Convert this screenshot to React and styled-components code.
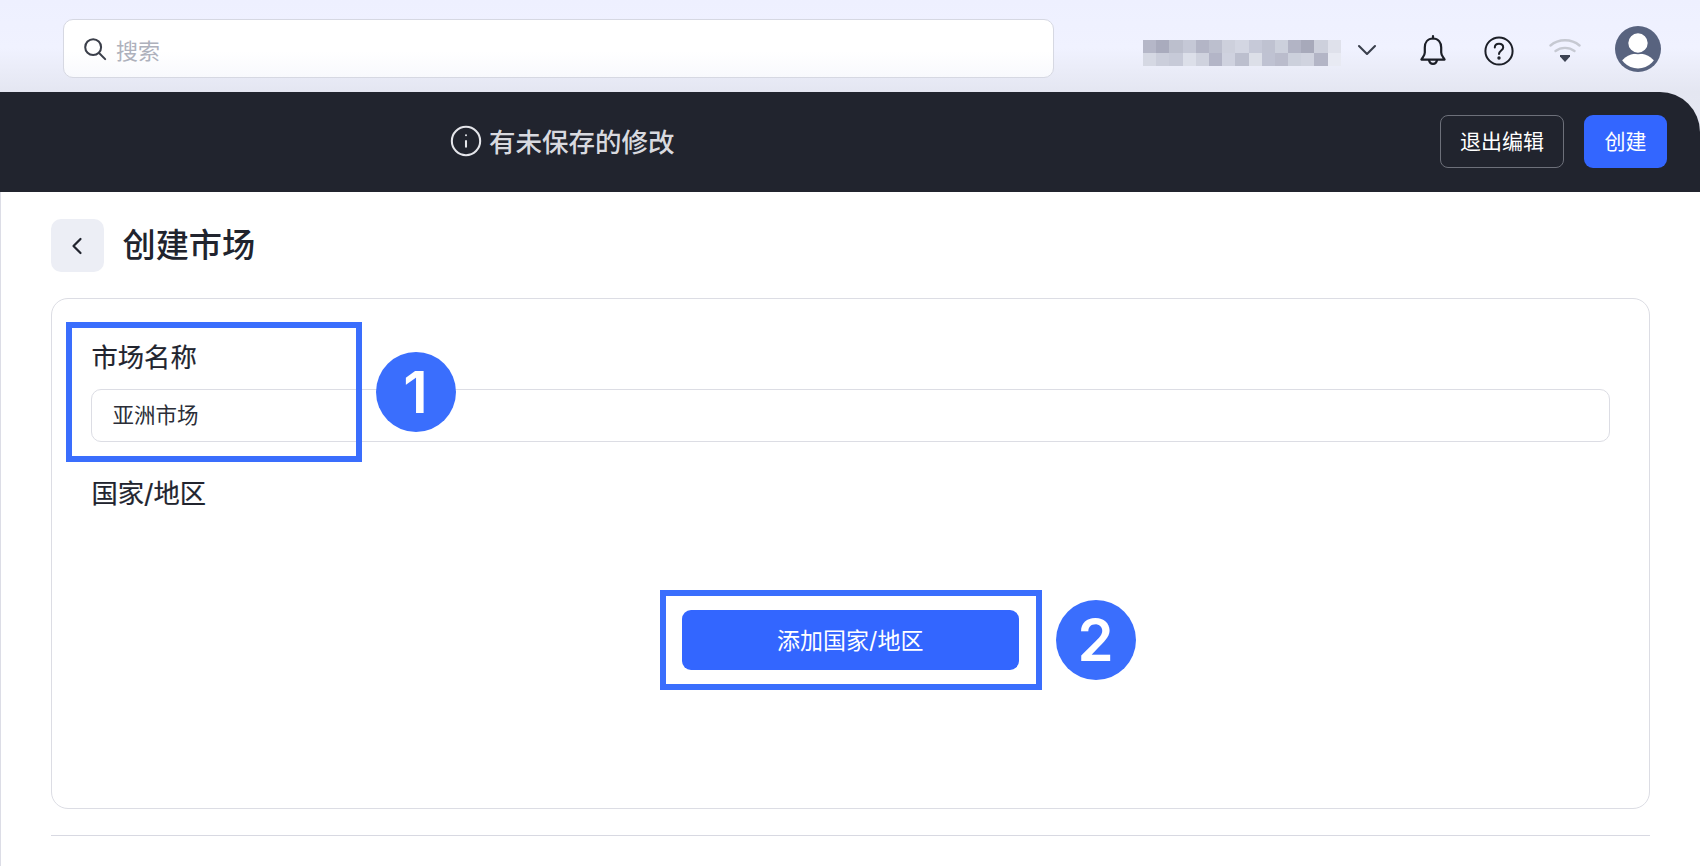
import styled, { createGlobalStyle } from "styled-components"
import { ChevronLeft, Info } from "lucide-react"

const GlobalStyle = createGlobalStyle`
  html, body {
    margin: 0;
    background: #fff;
    overflow: hidden;
  }
  body {
    font-family: "Inter", "Noto Sans CJK SC", sans-serif;
    color: #21242e;
  }
`

const BLUR_ROWS = [
  ["#b5b7c8", "#a9abbd", "#bcbfcd", "#c5c8d6", "#b3b5c6", "#bcbfce", "#cdd0dc", "#d3d6e2", "#c6c9d8", "#bfc2d1", "#ccd0dc", "#b2b4c5", "#a7a9ba", "#cdd0dc", "#dfe1eb"],
  ["#d5d8e3", "#cbcedb", "#c7cad8", "#dcdfe9", "#cfd2de", "#b3b5c7", "#cfd2df", "#bcbfce", "#dcdfe8", "#bfc2d2", "#babccc", "#ccd0dc", "#d0d3df", "#b3b5c6", "#e8eaf3"],
]

function SearchIcon() {
  return (
    <svg width="24" height="24" viewBox="0 0 26 26" fill="none" stroke="#3b3f4a" strokeWidth="2.2" strokeLinecap="round">
      <circle cx="11" cy="11" r="8.6" />
      <path d="M17.4 17.4L24 24" />
    </svg>
  )
}

function ChevronIcon() {
  return (
    <svg width="20" height="12" viewBox="0 0 20 12" fill="none" stroke="#3a3f4c" strokeWidth="2.1" strokeLinecap="round" strokeLinejoin="round">
      <path d="M2 2L10 10L18 2" />
    </svg>
  )
}

function BellIcon() {
  return (
    <svg width="28" height="32" viewBox="0 0 28 32" fill="none" stroke="#1c1f27" strokeWidth="2.2" strokeLinejoin="round" strokeLinecap="round">
      <path d="M14 2V4.5" />
      <path d="M14 4.5C8.6 4.5 5.8 8.6 5.8 13.5V18.5C5.8 21.6 3.8 23 2.4 25.6H25.6C24.2 23 22.2 21.6 22.2 18.5V13.5C22.2 8.6 19.4 4.5 14 4.5Z" />
      <path d="M10 26C10.4 28.6 12 29.8 14 29.8C16 29.8 17.6 28.6 18 26" />
    </svg>
  )
}

function HelpIcon() {
  return (
    <svg width="30" height="30" viewBox="0 0 30 30" fill="none" stroke="#1c1f27" strokeWidth="2" strokeLinecap="round">
      <circle cx="15" cy="15" r="13.6" />
      <path d="M10.8 11.6C10.8 9.2 12.7 7.8 15 7.8C17.4 7.8 19.2 9.3 19.2 11.4C19.2 14.4 15 14.6 15 18" />
      <circle cx="15" cy="22" r="0.7" fill="#1c1f27" />
    </svg>
  )
}

function WifiIcon() {
  return (
    <svg width="32" height="26" viewBox="0 0 32 26" fill="none">
      <path d="M1.5 8.5C9.5 1.5 22.5 1.5 30.5 8.5" stroke="#c6c9d2" strokeWidth="2.4" strokeLinecap="round" />
      <path d="M6.5 14C12 9.8 20 9.8 25.5 14" stroke="#c6c9d2" strokeWidth="2.4" strokeLinecap="round" />
      <path d="M11 18H21V19.5L16 25L11 19.5Z" fill="#3d4354" />
    </svg>
  )
}

function AvatarIcon() {
  return (
    <svg width="46" height="46" viewBox="0 0 46 46">
      <defs>
        <clipPath id="avatar-clip">
          <circle cx="23" cy="23" r="19.5" />
        </clipPath>
      </defs>
      <circle cx="23" cy="23" r="23" fill="#58637f" />
      <ellipse cx="23" cy="41" rx="18" ry="13.5" fill="#fff" clipPath="url(#avatar-clip)" />
      <circle cx="23" cy="17" r="10.5" fill="#fff" stroke="#58637f" strokeWidth="1.6" />
    </svg>
  )
}

export default function App() {
  return (
    <>
      <GlobalStyle />
      <Page>
        <Header>
          <TopBar>
            <SearchBox>
              <SearchIcon />
              <SearchHint>搜索</SearchHint>
            </SearchBox>
            <BlurredName>
              {BLUR_ROWS.flat().map((color, i) => (
                <BlurCell key={i} $color={color} />
              ))}
            </BlurredName>
            <IconSlot $left={16} $width={20}>
              <ChevronIcon />
            </IconSlot>
            <IconSlot $left={42.5} $width={28}>
              <BellIcon />
            </IconSlot>
            <IconSlot $left={36.5} $width={30} $top={9}>
              <HelpIcon />
            </IconSlot>
            <IconSlot $left={35.5} $width={32}>
              <WifiIcon />
            </IconSlot>
            <IconSlot $left={33.5} $width={46} $top={6}>
              <AvatarIcon />
            </IconSlot>
          </TopBar>
          <EditBar>
            <Notice>
              <Info size={34} strokeWidth={1.45} color="#e4e5ea" />
              <NoticeText>有未保存的修改</NoticeText>
            </Notice>
            <OutlineButton>退出编辑</OutlineButton>
            <PrimaryButton>创建</PrimaryButton>
          </EditBar>
        </Header>
        <Main>
          <TitleRow>
            <BackButton>
              <ChevronLeft size={28} strokeWidth={1.9} color="#21242e" />
            </BackButton>
            <Title>创建市场</Title>
          </TitleRow>
          <Card>
            <FieldLabel>市场名称</FieldLabel>
            <NameInput>亚洲市场</NameInput>
            <FieldLabel $top={35}>国家/地区</FieldLabel>
            <AddButton>添加国家/地区</AddButton>
            <MarkBox $left={14} $top={23} $width={296} $height={140} />
            <MarkDot $left={324} $top={53}>1</MarkDot>
            <MarkBox $left={608} $top={291} $width={382} $height={100} />
            <MarkDot $left={1004} $top={301}>2</MarkDot>
          </Card>
          <Divider />
        </Main>
      </Page>
    </>
  )
}

const Page = styled.div`
  width: 1700px;
  height: 866px;
  overflow: hidden;
`
const Header = styled.header`
  background: linear-gradient(#eef0ff 0, #f0f2ff 48px, #e4e6f1 92px, #e9ebf5 100%);
`
const TopBar = styled.div`
  height: 92px;
  display: flex;
  align-items: center;
  padding-left: 63px;
  box-sizing: border-box;
`
const SearchBox = styled.div`
  width: 991px;
  height: 59px;
  margin-top: 5px;
  box-sizing: border-box;
  display: flex;
  align-items: center;
  gap: 9px;
  padding-left: 19px;
  background: linear-gradient(#fff 55%, #f8f9fd);
  border: 1.5px solid #d6d8e2;
  border-radius: 10px;
`
const SearchHint = styled.span`
  font-size: 22px;
  color: #aeb1bc;
`
const BlurredName = styled.div`
  display: grid;
  grid-template-columns: repeat(15, 13.2px);
  grid-auto-rows: 13px;
  margin-left: 89px;
  margin-top: 13px;
`
const BlurCell = styled.div`
  background: ${(p) => p.$color};
`
const IconSlot = styled.div`
  width: ${(p) => p.$width}px;
  margin-left: ${(p) => p.$left}px;
  margin-top: ${(p) => p.$top || 8}px;
  display: flex;
  justify-content: center;
  align-items: center;
  flex-shrink: 0;
`
const EditBar = styled.div`
  height: 100px;
  box-sizing: border-box;
  display: flex;
  align-items: center;
  padding: 0 33px 2px 449px;
  background: #21242e;
  border-top-right-radius: 40px;
`
const Notice = styled.div`
  display: flex;
  align-items: center;
  gap: 6px;
  flex: 1;
`
const NoticeText = styled.span`
  font-size: 26.5px;
  font-weight: 500;
  color: #d8d9df;
  margin-top: -1px;
`
const OutlineButton = styled.button`
  width: 124px;
  height: 53px;
  padding: 0 0 2px;
  background: transparent;
  border: 1.5px solid #6d707a;
  border-radius: 8px;
  color: #fff;
  font-family: inherit;
  font-size: 21px;
`
const PrimaryButton = styled.button`
  width: 83px;
  height: 53px;
  margin-left: 20px;
  padding: 0 0 2px;
  background: #3366ff;
  border: none;
  border-radius: 9px;
  color: #fff;
  font-family: inherit;
  font-size: 21px;
`
const Main = styled.main`
  height: 674px;
  box-sizing: border-box;
  padding: 27px 50px 0 49.5px;
  border-left: 1.5px solid #dcdde6;
`
const TitleRow = styled.div`
  display: flex;
  align-items: center;
  gap: 19px;
`
const BackButton = styled.button`
  width: 53px;
  height: 53px;
  padding: 0;
  display: flex;
  align-items: center;
  justify-content: center;
  background: #eceef5;
  border: none;
  border-radius: 10px;
`
const Title = styled.h1`
  margin: 0;
  font-size: 33.2px;
  line-height: 53px;
  font-weight: 500;
  color: #21242e;
`
const Card = styled.section`
  position: relative;
  height: 511px;
  margin-top: 26px;
  box-sizing: border-box;
  padding: 42px 40px 0;
  border: 1.5px solid #dcdde4;
  border-radius: 17px;
`
const FieldLabel = styled.div`
  margin-top: ${(p) => p.$top || 0}px;
  font-size: 26.3px;
  line-height: 34px;
  font-weight: 400;
  -webkit-text-stroke: 0.2px #21242e;
  color: #21242e;
`
const NameInput = styled.div`
  height: 53px;
  margin: 14px -1px 0 -1px;
  box-sizing: border-box;
  display: flex;
  align-items: center;
  padding: 0 0 5px 21px;
  border: 1.5px solid #dcdde4;
  border-radius: 10px;
  font-size: 21.5px;
  color: #2b2e38;
`
const AddButton = styled.button`
  display: block;
  width: 337px;
  height: 60px;
  margin: 99px auto 0;
  padding: 0 0 3px;
  background: #3366ff;
  border: none;
  border-radius: 9px;
  color: #fff;
  font-family: inherit;
  font-size: 23px;
`
const MarkBox = styled.div`
  position: absolute;
  left: ${(p) => p.$left}px;
  top: ${(p) => p.$top}px;
  width: ${(p) => p.$width}px;
  height: ${(p) => p.$height}px;
  box-sizing: border-box;
  border: 6px solid #3a6efd;
`
const MarkDot = styled.div`
  position: absolute;
  left: ${(p) => p.$left}px;
  top: ${(p) => p.$top}px;
  width: 80px;
  height: 80px;
  display: flex;
  align-items: center;
  justify-content: center;
  background: #3a6efd;
  border-radius: 50%;
  color: #fff;
  font-size: 58px;
  font-weight: 600;
  line-height: 1;
`
const Divider = styled.hr`
  margin: 26px 0 0;
  border: none;
  border-top: 1.5px solid #d8d9e2;
`
